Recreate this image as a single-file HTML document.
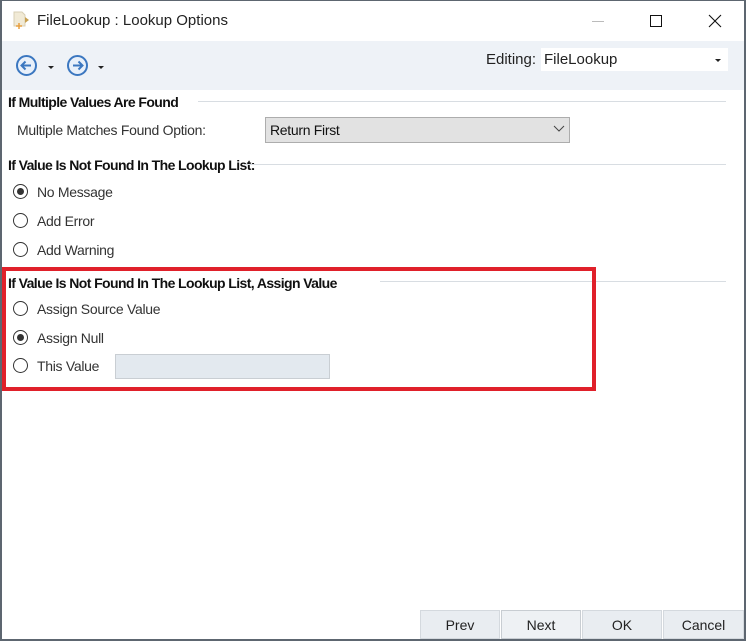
<!DOCTYPE html>
<html><head><style>
*{margin:0;padding:0;box-sizing:border-box}
body{width:746px;height:641px;overflow:hidden;background:#fff;font-family:"Liberation Sans",sans-serif;position:relative}
.abs{position:absolute}
.frame{left:0;top:0;width:746px;height:641px;border:1px solid #5d6670;border-width:1px 2px 2px 2px;pointer-events:none}
.lbl{font-size:14px;color:#333;letter-spacing:-0.3px}
.hd{font-size:14px;font-weight:bold;color:#111;letter-spacing:-0.6px}
.line{height:1px;background:#d8dde2}
.rad{width:15px;height:15px;border:1px solid #333;border-radius:50%;background:#fff}
.rad.on::after{content:"";position:absolute;left:3px;top:3px;width:7px;height:7px;border-radius:50%;background:#333}
.btn{top:610px;height:29px;width:80px;background:#e9edf1;border:1px solid #d4d9de;font-size:14px;color:#222;text-align:center;line-height:28px}
</style></head><body>
<!-- title -->
<svg class="abs" style="left:12px;top:11px" width="20" height="20"><path d="M2 1h8l3 3v11H2z" fill="#f1ead6" stroke="#d8cfb4"/><path d="M13 6l4 3-4 3z" fill="#c8a050"/><path d="M7 12v6M4 15h6" stroke="#e8a040" stroke-width="1.5"/></svg>
<div class="abs" style="left:37px;top:12px;font-size:15px;color:#222">FileLookup : Lookup Options</div>
<div class="abs" style="left:592px;top:21px;width:12px;height:1px;background:#bbb"></div>
<div class="abs" style="left:650px;top:15px;width:12px;height:12px;border:1px solid #111"></div>
<svg class="abs" style="left:708px;top:14px" width="14" height="14"><path d="M1 1L13 13M13 1L1 13" stroke="#111" stroke-width="1.1"/></svg>
<!-- toolbar -->
<div class="abs" style="left:0;top:41px;width:746px;height:49px;background:#eef2f7"></div>
<svg class="abs" style="left:15px;top:54px" width="24" height="24"><circle cx="11.5" cy="11.5" r="9.5" fill="#e8f0fa" stroke="#3b77c0" stroke-width="2"/><path d="M16 11.5H7M10.5 7.5l-4 4 4 4" fill="none" stroke="#3b77c0" stroke-width="2"/></svg>
<div class="abs" style="left:48px;top:66px;border:3px solid transparent;border-top:3px solid #222;border-bottom:0"></div>
<svg class="abs" style="left:66px;top:54px" width="24" height="24"><circle cx="11.5" cy="11.5" r="9.5" fill="#e8f0fa" stroke="#3b77c0" stroke-width="2"/><path d="M7 11.5h9M12.5 7.5l4 4-4 4" fill="none" stroke="#3b77c0" stroke-width="2"/></svg>
<div class="abs" style="left:98px;top:66px;border:3px solid transparent;border-top:3px solid #222;border-bottom:0"></div>
<div class="abs" style="left:486px;top:51px;font-size:15px;color:#222">Editing:</div>
<div class="abs" style="left:541px;top:48px;width:187px;height:23px;background:#fff"></div>
<div class="abs" style="left:544px;top:51px;font-size:15px;color:#222">FileLookup</div>
<div class="abs" style="left:715px;top:59px;border:3px solid transparent;border-top:3px solid #222;border-bottom:0"></div>
<!-- section 1 -->
<div class="abs hd" style="left:8px;top:94px">If Multiple Values Are Found</div>
<div class="abs line" style="left:198px;top:101px;width:528px"></div>
<div class="abs lbl" style="left:17px;top:122px">Multiple Matches Found Option:</div>
<div class="abs" style="left:265px;top:117px;width:305px;height:26px;background:#e2e2e2;border:1px solid #adadad"></div>
<div class="abs lbl" style="left:270px;top:122px;color:#111">Return First</div>
<svg class="abs" style="left:553px;top:125px" width="12" height="8"><path d="M1 1l5 5 5-5" fill="none" stroke="#444"/></svg>
<!-- section 2 -->
<div class="abs hd" style="left:8px;top:157px">If Value Is Not Found In The Lookup List:</div>
<div class="abs line" style="left:244px;top:164px;width:482px"></div>
<div class="abs rad on" style="left:13px;top:184px"></div><div class="abs lbl" style="left:37px;top:184px">No Message</div>
<div class="abs rad" style="left:13px;top:213px"></div><div class="abs lbl" style="left:37px;top:213px">Add Error</div>
<div class="abs rad" style="left:13px;top:242px"></div><div class="abs lbl" style="left:37px;top:242px">Add Warning</div>
<!-- section 3 -->
<div class="abs line" style="left:380px;top:281px;width:346px"></div>
<div class="abs" style="left:2px;top:267px;width:594px;height:124px;border:4px solid #e0202a"></div>
<div class="abs hd" style="left:8px;top:275px">If Value Is Not Found In The Lookup List, Assign Value</div>
<div class="abs rad" style="left:13px;top:301px"></div><div class="abs lbl" style="left:37px;top:301px">Assign Source Value</div>
<div class="abs rad on" style="left:13px;top:330px"></div><div class="abs lbl" style="left:37px;top:330px">Assign Null</div>
<div class="abs rad" style="left:13px;top:358px"></div><div class="abs lbl" style="left:37px;top:358px">This Value</div>
<div class="abs" style="left:115px;top:354px;width:215px;height:25px;background:#e3e9ef;border:1px solid #c9ced3"></div>
<!-- buttons -->
<div class="abs btn" style="left:420px">Prev</div>
<div class="abs btn" style="left:501px;background:#eef1f4;border-color:#c8cdd2">Next</div>
<div class="abs btn" style="left:582px">OK</div>
<div class="abs btn" style="left:663px;width:81px">Cancel</div>
<div class="abs frame"></div>
</body></html>
